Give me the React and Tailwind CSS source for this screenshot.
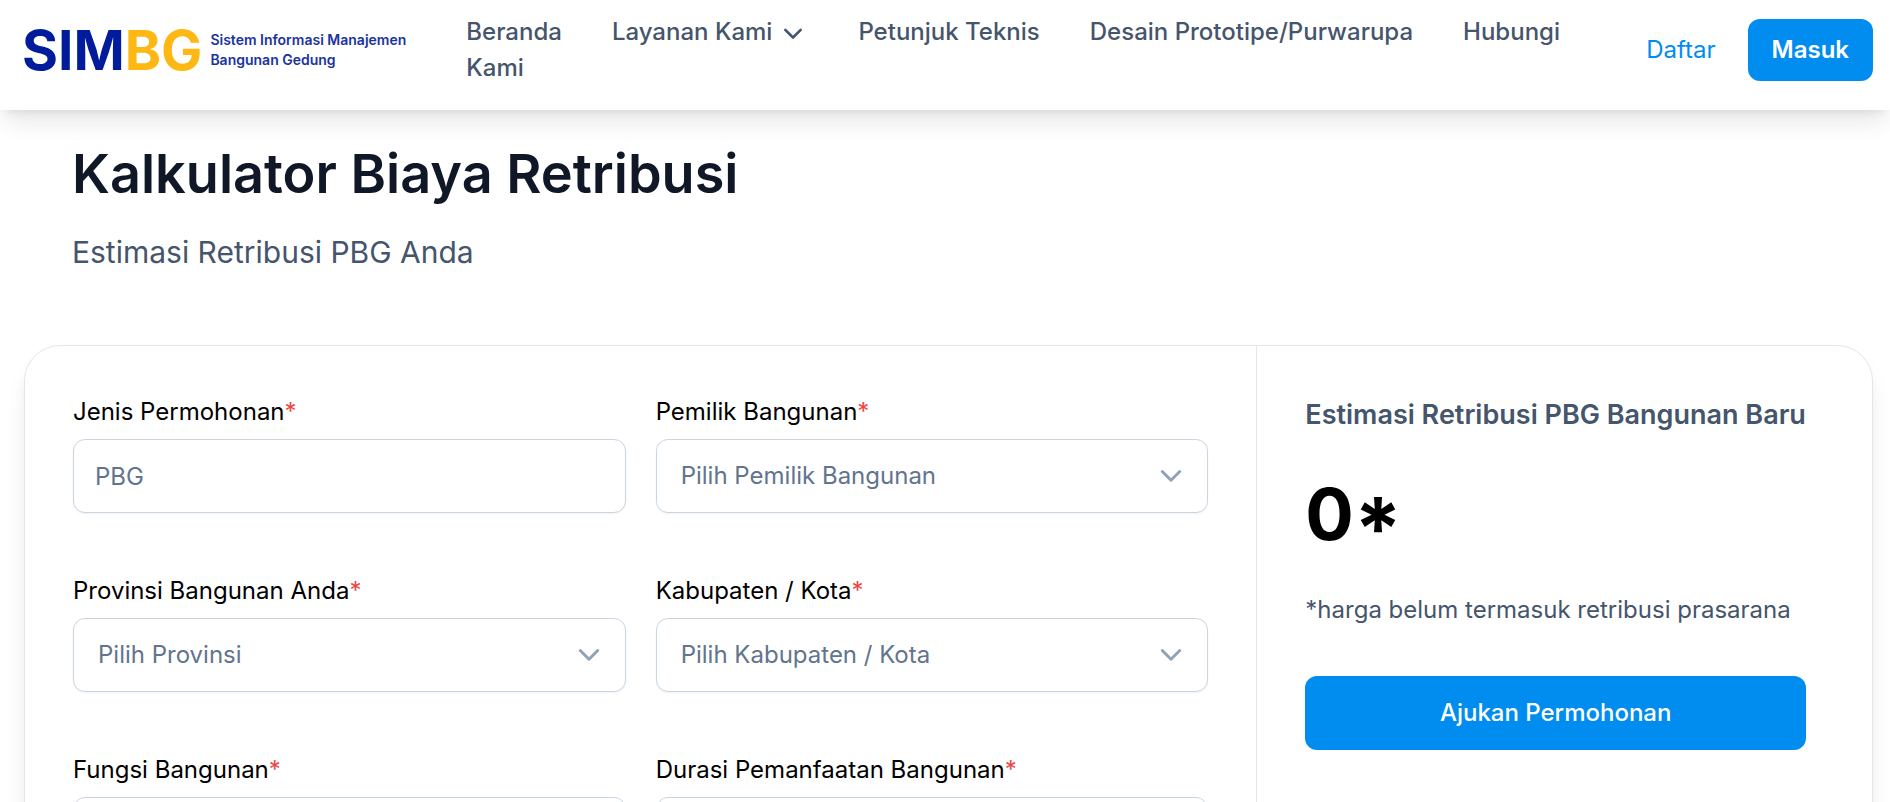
import React from "react";

const ChevronDown = ({ className }) => (
  <svg
    className={className}
    viewBox="0 0 30 30"
    fill="none"
    stroke="currentColor"
    strokeWidth="2.6"
    strokeLinecap="round"
    strokeLinejoin="round"
    aria-hidden="true"
  >
    <path d="M7.3 12.8 15 20.5l7.7-7.7" />
  </svg>
);

const Logo = () => (
  <a href="#" className="flex shrink-0 items-center gap-2 text-[#001c9c]">
    <span className="text-[55px] leading-[60px] font-bold">
      SIM<span className="text-[#fdb813]">BG</span>
    </span>
    <span className="text-[14px] leading-[20px] font-semibold text-[#1a339f]">
      Sistem Informasi Manajemen
      <br />
      Bangunan Gedung
    </span>
  </a>
);

const Header = () => (
  <header className="relative z-10 flex items-center bg-white pt-[13px] pr-[17px] pb-[23px] pl-[22px] shadow-[0_15px_22px_-4px_rgba(0,0,0,0.1),0_6px_9px_-6px_rgba(0,0,0,0.1)]">
    <Logo />
    <nav className="ml-[60px] flex-1 font-medium text-slate-600">
      <a href="#" className="mr-[50px]">
        Beranda
      </a>
      <button type="button" className="mr-[50px] inline-flex items-center gap-1.5">
        Layanan Kami
        <ChevronDown className="size-[30px]" />
      </button>
      <a href="#" className="mr-[50px]">
        Petunjuk Teknis
      </a>
      <a href="#" className="mr-[50px]">
        Desain Prototipe/Purwarupa
      </a>
      <a href="#">Hubungi Kami</a>
    </nav>
    <div className="ml-12 flex items-center gap-8 py-1.5">
      <a href="#" className="text-[#008def]">
        Daftar
      </a>
      <button
        type="button"
        className="h-[62px] rounded-xl bg-[#008def] px-6 font-semibold text-white"
      >
        Masuk
      </button>
    </div>
  </header>
);

const Field = ({ id, label, children }) => (
  <div className="flex flex-col gap-[9px]">
    <label htmlFor={id} className="text-black">
      {label}
      <span className="text-[#ef4444]">*</span>
    </label>
    {children}
  </div>
);

const SelectField = ({ id, label, placeholder }) => (
  <Field id={id} label={label}>
    <div className="relative">
      <select
        id={id}
        className="h-[74px] w-full appearance-none rounded-xl border border-slate-300 bg-white px-6 text-slate-500 shadow-xs"
      >
        <option>{placeholder}</option>
      </select>
      <ChevronDown className="pointer-events-none absolute top-[18px] right-5 size-[34px] text-slate-400" />
    </div>
  </Field>
);

const CalculatorForm = () => (
  <form className="grid grid-cols-2 gap-x-[30px] gap-y-[60px] p-12">
    <Field id="jenis" label="Jenis Permohonan">
      <input
        id="jenis"
        type="text"
        defaultValue="PBG"
        className="h-[74px] w-full rounded-xl border border-slate-300 bg-white px-[21px] text-slate-500 shadow-xs"
      />
    </Field>
    <SelectField id="pemilik" label="Pemilik Bangunan" placeholder="Pilih Pemilik Bangunan" />
    <SelectField id="provinsi" label="Provinsi Bangunan Anda" placeholder="Pilih Provinsi" />
    <SelectField id="kabupaten" label="Kabupaten / Kota" placeholder="Pilih Kabupaten / Kota" />
    <SelectField id="fungsi" label="Fungsi Bangunan" placeholder="Pilih Fungsi Bangunan" />
    <SelectField id="durasi" label="Durasi Pemanfaatan Bangunan" placeholder="Pilih Durasi" />
  </form>
);

const Estimate = () => (
  <aside className="border-l border-neutral-200 py-12 pr-[66px] pl-12">
    <h2 className="text-[27px] leading-[42px] font-semibold whitespace-nowrap text-slate-600">
      Estimasi Retribusi PBG Bangunan Baru
    </h2>
    <p className="mt-[42px] h-[72px] text-[72px] leading-[72px] font-bold text-black">
      0<span className="align-[-20px] text-[86px] leading-none">*</span>
    </p>
    <p className="mt-[42px] text-slate-600">*harga belum termasuk retribusi prasarana</p>
    <button
      type="button"
      className="mt-12 h-[74px] w-full rounded-xl bg-[#008def] font-medium text-white"
    >
      Ajukan Permohonan
    </button>
  </aside>
);

const App = () => {
  return (
    <div className="h-screen overflow-hidden bg-white font-[Inter,sans-serif] text-[24px] leading-[36px]">
      <Header />
      <main className="pt-[34px] pr-[17px] pl-6">
        <div className="px-12">
          <h1 className="text-[54px] leading-[60px] font-semibold text-gray-900">
            Kalkulator Biaya Retribusi
          </h1>
          <p className="mt-[27px] text-[30px] leading-[42px] text-slate-600">
            Estimasi Retribusi PBG Anda
          </p>
        </div>
        <div className="mt-[72px] grid grid-cols-[2fr_1fr] rounded-[36px] border border-neutral-200 bg-white shadow-[0_15px_22px_-4px_rgba(0,0,0,0.1),0_6px_9px_-6px_rgba(0,0,0,0.1)]">
          <CalculatorForm />
          <Estimate />
        </div>
      </main>
    </div>
  );
};

export default App;
